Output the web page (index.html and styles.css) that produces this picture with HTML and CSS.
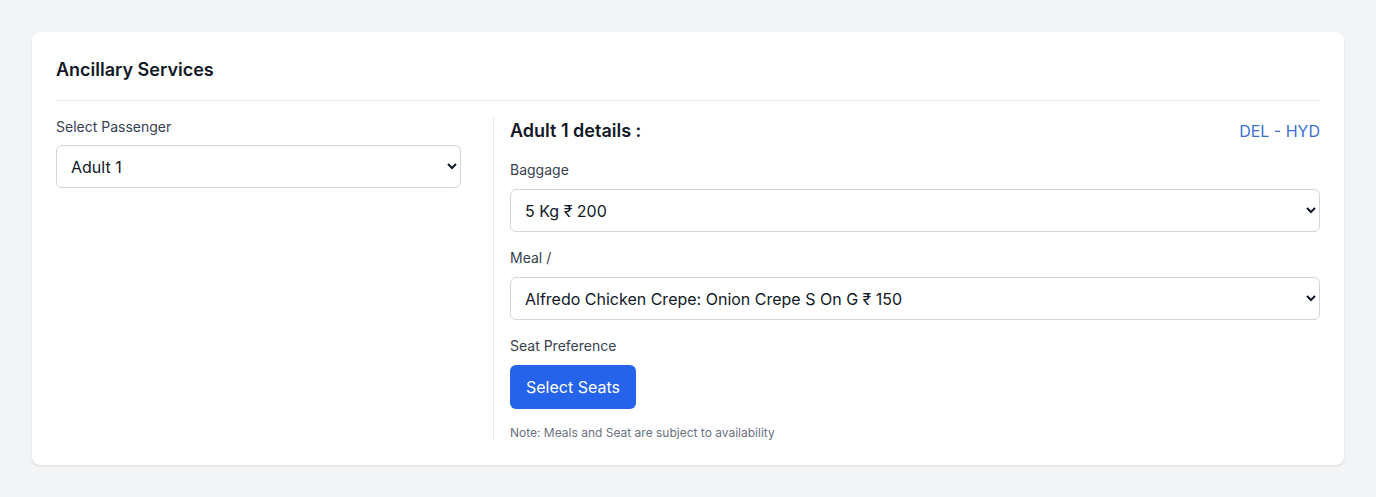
FILE: index.html
```html
<!DOCTYPE html>
<html>
<head>
<meta charset="utf-8">
<link rel="stylesheet" href="styles.css">
</head>
<body>
<div class="page">
  <div class="card">
    <h2 class="title">Ancillary Services</h2>
    <div class="grid">
      <div class="left">
        <label class="label label-left">Select Passenger</label>
        <select class="select"><option>Adult 1</option></select>
      </div>
      <div class="right">
        <div class="head">
          <h3 class="details">Adult 1 details :</h3>
          <span class="route">DEL - HYD</span>
        </div>
        <div class="field">
          <label class="label">Baggage</label>
          <select class="select"><option>5 Kg ₹ 200</option></select>
        </div>
        <div class="field">
          <label class="label">Meal /</label>
          <select class="select"><option>Alfredo Chicken Crepe: Onion Crepe S On G ₹ 150</option></select>
        </div>
        <div class="field">
          <label class="label">Seat Preference</label>
          <div><button class="btn">Select Seats</button></div>
        </div>
        <p class="note">Note: Meals and Seat are subject to availability</p>
      </div>
    </div>
  </div>
</div>
</body>
</html>
```
FILE: styles.css
```css
* { box-sizing: border-box; }
html, body { margin: 0; padding: 0; }
body {
  background: #f3f4f6;
  font-family: Inter, "Noto Sans", sans-serif;
  color: #111827;
}
.page { padding: 32px; }
.card {
  background: #fff;
  border-radius: 8px;
  box-shadow: 0 1px 3px rgba(0,0,0,0.08), 0 1px 2px rgba(0,0,0,0.04);
  padding: 24px;
}
.title {
  margin: 0;
  font-size: 18px;
  line-height: 28px;
  font-weight: 600;
  padding-bottom: 16px;
  border-bottom: 1px solid #e5e7eb;
}
.grid {
  display: flex;
  margin-top: 16px;
}
.left {
  width: 405px;
  flex: none;
  display: flex;
  flex-direction: column;
}
.label {
  display: block;
  font-size: 14px;
  line-height: 20px;
  color: #374151;
  margin-bottom: 9px;
}
.label-left { margin-bottom: 8px; }
.select {
  width: 100%;
  height: 43px;
  font-family: inherit;
  font-size: 16px;
  color: #111827;
  background: #fff;
  border: 1px solid #d1d5db;
  border-radius: 6px;
  padding: 0 10px;
}
.right {
  flex: 1;
  margin-left: 32px;
  border-left: 1px solid #e5e7eb;
  padding-left: 16px;
}
.head {
  display: flex;
  justify-content: space-between;
  align-items: center;
  height: 28px;
  margin-bottom: 15px;
}
.details {
  margin: 0;
  font-size: 18px;
  font-weight: 600;
  line-height: 28px;
}
.route {
  color: #3b6fd4;
  font-size: 16px;
}
.field { margin-bottom: 16px; }
.btn {
  background: #2563eb;
  color: #fff;
  border: none;
  border-radius: 6px;
  font-family: inherit;
  font-size: 16px;
  height: 44px;
  padding: 0 16px;
  display: block;
}
.note {
  margin: 0;
  font-size: 12px;
  line-height: 16px;
  color: #6b7280;
}
```
